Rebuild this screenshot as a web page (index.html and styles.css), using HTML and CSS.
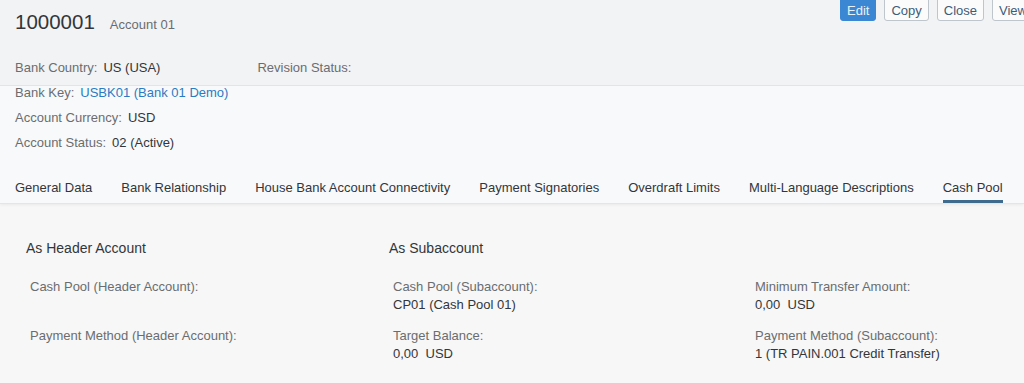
FILE: index.html
```
<!DOCTYPE html>
<html lang="en">
<head>
    <meta charset="UTF-8">
    <meta name="viewport" content="width=device-width, initial-scale=1.0">
    <title>Bank Account 1000001</title>
    <link rel="stylesheet" href="styles.css">
</head>
<body>
    <div class="page">
        <div class="header">
            <div class="title-bar">
                <div class="title">
                    <span class="account-id">1000001</span>
                    <span class="account-name">Account 01</span>
                </div>
                <div class="actions">
                    <button class="btn btn-primary">Edit</button>
                    <button class="btn">Copy</button>
                    <button class="btn">Close</button>
                    <button class="btn">View</button>
                </div>
            </div>
            <div class="header-fields">
                <div class="field-row">
                    <span class="field">
                        <span class="label">Bank Country:</span>
                        <span class="value">US (USA)</span>
                    </span>
                    <span class="field field-second">
                        <span class="label">Revision Status:</span>
                    </span>
                </div>
                <div class="field-row">
                    <span class="field">
                        <span class="label">Bank Key:</span>
                        <span class="value link">USBK01 (Bank 01 Demo)</span>
                    </span>
                </div>
                <div class="field-row">
                    <span class="field">
                        <span class="label">Account Currency:</span>
                        <span class="value">USD</span>
                    </span>
                </div>
                <div class="field-row">
                    <span class="field">
                        <span class="label">Account Status:</span>
                        <span class="value">02 (Active)</span>
                    </span>
                </div>
            </div>

            <nav class="tabs">
                <span class="tab">General Data</span>
                <span class="tab">Bank Relationship</span>
                <span class="tab">House Bank Account Connectivity</span>
                <span class="tab">Payment Signatories</span>
                <span class="tab">Overdraft Limits</span>
                <span class="tab">Multi-Language Descriptions</span>
                <span class="tab active">Cash Pool</span>
            </nav>
        </div>

        <div class="section">
            <div class="group">
                <h2>As Header Account</h2>
                <div class="item">
                    <div class="item-label">Cash Pool (Header Account):</div>
                </div>
                <div class="item">
                    <div class="item-label">Payment Method (Header Account):</div>
                </div>
            </div>
            <div class="group">
                <h2>As Subaccount</h2>
                <div class="item">
                    <div class="item-label">Cash Pool (Subaccount):</div>
                    <div class="item-value">CP01 (Cash Pool 01)</div>
                </div>
                <div class="item">
                    <div class="item-label">Target Balance:</div>
                    <div class="item-value">0,00&nbsp; USD</div>
                </div>
            </div>
            <div class="group">
                <h2>&nbsp;</h2>
                <div class="item">
                    <div class="item-label">Minimum Transfer Amount:</div>
                    <div class="item-value">0,00&nbsp; USD</div>
                </div>
                <div class="item">
                    <div class="item-label">Payment Method (Subaccount):</div>
                    <div class="item-value">1 (TR PAIN.001 Credit Transfer)</div>
                </div>
            </div>
        </div>
    </div>
</body>
</html>
```

FILE: styles.css
```
body {
    margin: 0;
    font-family: "Liberation Sans", Arial, sans-serif;
    font-size: 13px;
    color: #32363a;
    background-color: #f7f7f7;
    overflow: hidden;
}

.page {
    width: 1024px;
    height: 383px;
    overflow: hidden;
}

/* header: darker strip above the line at 85px, lighter below */
.header {
    background: linear-gradient(#f2f3f5 0, #f2f3f5 85px, #e1e5ea 85px, #e1e5ea 86px, #f8f9fa 86px);
    padding-left: 15px;
    border-bottom: 1px solid #e3e5e8;
    box-shadow: 0 1px 3px rgba(0, 0, 0, 0.06);
}

.title-bar {
    display: flex;
    justify-content: space-between;
    align-items: flex-start;
    height: 55px;
}

.title {
    padding-top: 10px;
    display: flex;
    align-items: baseline;
    gap: 15px;
}

.account-id {
    font-size: 20.5px;
    color: #32363a;
}

.account-name {
    font-size: 13px;
    color: #6a6d70;
}

.actions {
    display: flex;
    gap: 8px;
    margin-top: -5px;
    margin-right: -10px;
}

.btn {
    font-family: inherit;
    font-size: 13px;
    height: 26px;
    padding: 4px 6px 0 6px;
    border: 1px solid #bfc5cc;
    border-radius: 3px;
    background-color: #fbfbfb;
    color: #3d5c7a;
}

.btn-primary {
    background-color: #3b87d3;
    border-color: #3b87d3;
    color: #e9f2fb;
}

.field-row {
    display: flex;
    height: 25px;
    align-items: center;
}

.field {
    display: flex;
    gap: 6px;
}

.field-second {
    margin-left: 97px;
}

.label {
    color: #6a6d70;
}

.value {
    color: #32363a;
}

.link {
    color: #2b7bc4;
}

.tabs {
    display: flex;
    gap: 29px;
    margin-top: 13px;
    white-space: nowrap;
}

.tab {
    padding-top: 8px;
    line-height: 24px;
    border-bottom: 3px solid transparent;
    color: #32363a;
}

.tab.active {
    border-bottom-color: #3e6b8e;
}

.section {
    display: grid;
    grid-template-columns: 363px 362px 1fr;
    padding: 35px 0 0 26px;
}

h2 {
    font-size: 14px;
    font-weight: normal;
    line-height: 18px;
    margin: 0 0 21px 0;
    color: #32363a;
}

.item {
    padding-left: 4px;
    height: 49px;
}

.item-label {
    color: #6a6d70;
    line-height: 18px;
}

.item-value {
    color: #32363a;
    line-height: 18px;
}
```
